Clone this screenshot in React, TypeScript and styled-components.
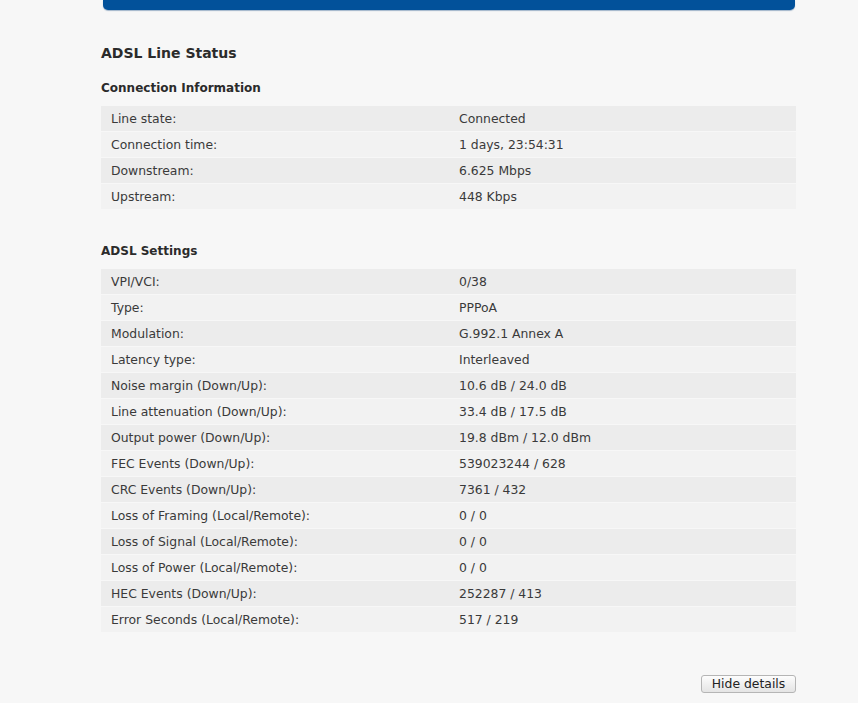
import React from 'react';
import styled, { createGlobalStyle } from 'styled-components';

type Row = [string, string];

const connection: Row[] = [
  ['Line state:', 'Connected'],
  ['Connection time:', '1 days, 23:54:31'],
  ['Downstream:', '6.625 Mbps'],
  ['Upstream:', '448 Kbps'],
];

const settings: Row[] = [
  ['VPI/VCI:', '0/38'],
  ['Type:', 'PPPoA'],
  ['Modulation:', 'G.992.1 Annex A'],
  ['Latency type:', 'Interleaved'],
  ['Noise margin (Down/Up):', '10.6 dB / 24.0 dB'],
  ['Line attenuation (Down/Up):', '33.4 dB / 17.5 dB'],
  ['Output power (Down/Up):', '19.8 dBm / 12.0 dBm'],
  ['FEC Events (Down/Up):', '539023244 / 628'],
  ['CRC Events (Down/Up):', '7361 / 432'],
  ['Loss of Framing (Local/Remote):', '0 / 0'],
  ['Loss of Signal (Local/Remote):', '0 / 0'],
  ['Loss of Power (Local/Remote):', '0 / 0'],
  ['HEC Events (Down/Up):', '252287 / 413'],
  ['Error Seconds (Local/Remote):', '517 / 219'],
];

const InfoTable = ({ rows }: { rows: Row[] }) => (
  <Table>
    {rows.map(([label, value], i) => (
      <TableRow key={label} $odd={i % 2 === 0}>
        <Label>{label}</Label>
        <Value>{value}</Value>
      </TableRow>
    ))}
  </Table>
);

const App = () => {
  return (
    <>
      <GlobalStyle />
      <Page>
        <HeaderBar />
        <Content>
          <Title>ADSL Line Status</Title>
          <SectionTitle>Connection Information</SectionTitle>
          <InfoTable rows={connection} />
          <SectionTitle $gap>ADSL Settings</SectionTitle>
          <InfoTable rows={settings} />
          <Footer>
            <Button>Hide details</Button>
          </Footer>
        </Content>
      </Page>
    </>
  );
};

const GlobalStyle = createGlobalStyle`
  html, body {
    margin: 0;
    padding: 0;
    background: #f7f7f7;
  }
  body {
    font-family: "DejaVu Sans", Verdana, sans-serif;
    font-size: 12.4px;
    color: #333;
  }
`;

const Page = styled.div`
  width: 858px;
  min-height: 703px;
  padding-left: 101px;
  box-sizing: border-box;
`;

const HeaderBar = styled.div`
  margin-left: 2px;
  width: 692px;
  height: 10px;
  background: #02519a;
  border-radius: 0 0 5px 5px;
  box-shadow: 0 1px 1px rgba(2, 60, 120, 0.35);
`;

const Content = styled.div`
  width: 695px;
  padding-top: 34px;
`;

const Title = styled.h1`
  margin: 0;
  font-size: 14px;
  font-weight: bold;
  color: #2b2b2b;
  line-height: 18px;
`;

const SectionTitle = styled.h2<{ $gap?: boolean }>`
  margin: ${(p) => (p.$gap ? '32px' : '17px')} 0 9px;
  font-size: 12px;
  font-weight: bold;
  color: #2b2b2b;
  line-height: 18px;
  height: 18px;
`;

const Table = styled.div`
  display: flex;
  flex-direction: column;
`;

const TableRow = styled.div<{ $odd: boolean }>`
  display: grid;
  grid-template-columns: 358px 1fr;
  height: 25px;
  margin-bottom: 1px;
  align-items: center;
  background: ${(p) => (p.$odd ? '#ececec' : '#f2f2f2')};
`;

const Label = styled.span`
  padding-left: 10px;
  color: #3a3a3a;
`;

const Value = styled.span`
  color: #3a3a3a;
`;

const Footer = styled.div`
  display: flex;
  justify-content: flex-end;
  padding-top: 42px;
`;

const Button = styled.button`
  font-family: "DejaVu Sans", Verdana, sans-serif;
  font-size: 12.4px;
  color: #222;
  height: 18px;
  width: 95px;
  padding: 0;
  border: 1px solid #b5b5b5;
  border-radius: 3px;
  background: linear-gradient(#fdfdfd, #e4e4e4);
  line-height: 16px;
`;

export default App;
